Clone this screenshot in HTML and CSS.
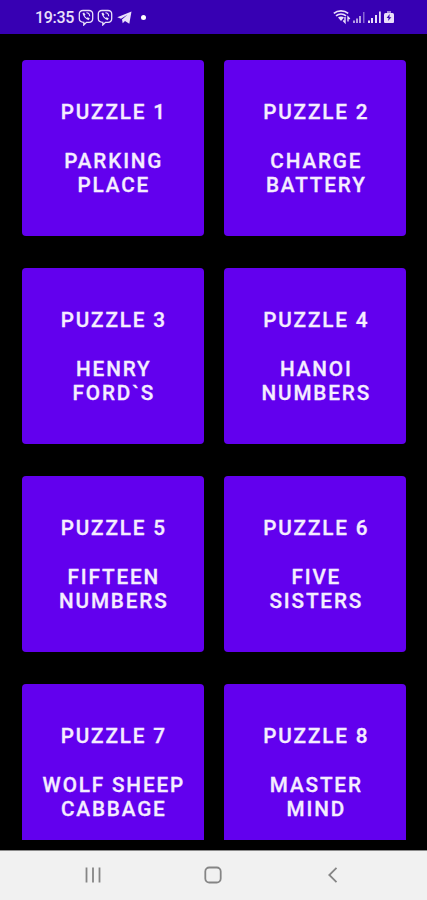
FILE: index.html
```html
<!DOCTYPE html>
<html lang="en">
<head>
    <meta charset="UTF-8">
    <meta name="viewport" content="width=device-width, initial-scale=1.0">
    <title>Puzzles</title>
    <link rel="stylesheet" href="styles.css">
</head>
<body>
    <header class="status-bar">
        <div class="status-left">
            <span class="time">19:35</span>
            <svg class="viber" viewBox="0 0 16 17" width="16" height="17">
                <path d="M5 1.500h6Q14.700 1.500 14.700 5v4.500q0 3.800-3.700 3.800H8.500L5.800 16v-2.700Q1.300 13.300 1.300 9.500V5Q1.300 1.500 5 1.500z" fill="none" stroke="currentColor" stroke-width="1.300"/>
                <path d="M4.500 4.200c.8 3.200 2.900 5.700 6 7l1.300-1.700-2-1.300-1 .8C7.600 8.300 7 7.500 6.700 6.600l.8-.9-1.400-2.100z" fill="currentColor"/>
                <path d="M8.400 3.700c2 .1 3.200 1.400 3.300 3.500" fill="none" stroke="currentColor" stroke-width="1.100"/>
            </svg>
            <svg class="viber" viewBox="0 0 16 17" width="16" height="17">
                <path d="M5 1.500h6Q14.700 1.500 14.700 5v4.500q0 3.800-3.700 3.800H8.500L5.800 16v-2.700Q1.300 13.300 1.300 9.500V5Q1.300 1.500 5 1.500z" fill="none" stroke="currentColor" stroke-width="1.300"/>
                <path d="M4.500 4.200c.8 3.200 2.900 5.700 6 7l1.300-1.700-2-1.300-1 .8C7.600 8.300 7 7.500 6.700 6.600l.8-.9-1.400-2.100z" fill="currentColor"/>
                <path d="M8.400 3.700c2 .1 3.200 1.400 3.300 3.500" fill="none" stroke="currentColor" stroke-width="1.100"/>
            </svg>
            <svg class="telegram" viewBox="0 0 15 13" width="15" height="13">
                <path d="M.3 6.200 14.500.4 12.300 12.700 8 10 5.700 12.200 5 8.400l5.500-4.600L4 7.800z" fill="currentColor"/>
            </svg>
            <span class="dot"></span>
        </div>
        <svg class="status-right" viewBox="0 0 62 16" width="62" height="16">
            <g fill="none" stroke="currentColor" stroke-width="1.700">
                <path d="M.8 4.300c4-3.200 10.400-3.200 14.400 0"/>
                <path d="M3 6.900c2.900-2.300 7.100-2.300 10 0"/>
            </g>
            <path d="M5 8.400c1.700-1.200 4.300-1.200 6 0L8 12z" fill="currentColor"/>
            <path d="M12 8v5.500l-1.800-2M15 12.500V8l1.800 2" fill="none" stroke="currentColor" stroke-width="1.400"/>
            <g fill="currentColor">
                <path d="M20 11.500h2V14h-2zM23 9.500h2V14h-2zM26 7h2v7h-2z" opacity=".7"/>
                <path d="M30 3h1.500v11H30z" opacity=".45"/>
                <path d="M35 11.500h2V14h-2zM38 9h2v5h-2zM42 6h2v8h-2zM46 2.500h1.800V14H46z"/>
                <path d="M54 2h4v2h-4z" opacity=".6"/>
                <path d="M51 5.500q0-1.500 1.500-1.500h7q1.500 0 1.500 1.500V13q0 1-1 1h-8q-1 0-1-1z"/>
            </g>
            <path class="bolt" d="M56.700 5 53.600 9h2l-.6 3L58.400 8.200h-2z"/>
        </svg>
    </header>

    <main class="puzzles">
        <button class="puzzle">PUZZLE 1<br><br>PARKING<br>PLACE</button>
        <button class="puzzle">PUZZLE 2<br><br>CHARGE<br>BATTERY</button>
        <button class="puzzle">PUZZLE 3<br><br>HENRY<br>FORD`S</button>
        <button class="puzzle">PUZZLE 4<br><br>HANOI<br>NUMBERS</button>
        <button class="puzzle">PUZZLE 5<br><br>FIFTEEN<br>NUMBERS</button>
        <button class="puzzle">PUZZLE 6<br><br>FIVE<br>SISTERS</button>
        <button class="puzzle">PUZZLE 7<br><br>WOLF SHEEP<br>CABBAGE</button>
        <button class="puzzle">PUZZLE 8<br><br>MASTER<br>MIND</button>
    </main>

    <nav class="nav-bar">
        <svg viewBox="0 0 20 20" width="20" height="20">
            <path d="M3.500 2.500v15M10 2.500v15M16.500 2.500v15"/>
        </svg>
        <svg viewBox="0 0 20 20" width="20" height="20">
            <rect x="2.300" y="2.500" width="15.400" height="15" rx="4"/>
        </svg>
        <svg viewBox="0 0 20 20" width="20" height="20">
            <path d="M13.500 2.800 6.300 10l7.200 7.200"/>
        </svg>
    </nav>
</body>
</html>
```

FILE: styles.css
```css
* {
    box-sizing: border-box;
}

body {
    display: flex;
    flex-direction: column;
    height: 900px;
    margin: 0;
    overflow: hidden;
    background: #000;
    font-family: Roboto, sans-serif;
}

.status-bar {
    display: flex;
    flex: none;
    justify-content: space-between;
    align-items: center;
    height: 34px;
    padding: 0 32px 0 35px;
    background: #3700b3;
    color: #e9e0fa;
}

.status-left {
    display: flex;
    align-items: center;
}

.time {
    width: 43px;
    font-size: 16px;
    font-weight: 500;
    letter-spacing: -0.3px;
}

.viber {
    margin-right: 3px;
}

.telegram {
    margin-left: 1px;
}

.dot {
    width: 5px;
    height: 5px;
    margin-left: 9px;
    border-radius: 50%;
    background: #fff;
}

.bolt {
    fill: #3700b3;
}

.puzzles {
    display: grid;
    flex: 1;
    grid-template-columns: 1fr 1fr;
    grid-auto-rows: 175.5px;
    gap: 32.5px 20.5px;
    margin-bottom: 10px;
    padding: 26.4px 20.7px 0 21.8px;
    overflow: hidden;
}

.puzzle {
    padding: 1px 0 0 2px;
    border: none;
    border-radius: 4px;
    background: #6200ee;
    color: #f5edff;
    font-family: inherit;
    font-size: 20.7px;
    font-weight: 500;
    line-height: 24.3px;
    letter-spacing: 1.85px;
    -webkit-text-stroke: 0.3px #f5edff;
}

.nav-bar {
    display: flex;
    flex: none;
    justify-content: center;
    align-items: center;
    gap: 100px;
    height: 50px;
    padding: 0 2px 1px 0;
    border-top: 1px solid #8a8a8a;
    background: #f1f1f1;
}

.nav-bar svg {
    fill: none;
    stroke: #858585;
    stroke-width: 1.8;
}
```
